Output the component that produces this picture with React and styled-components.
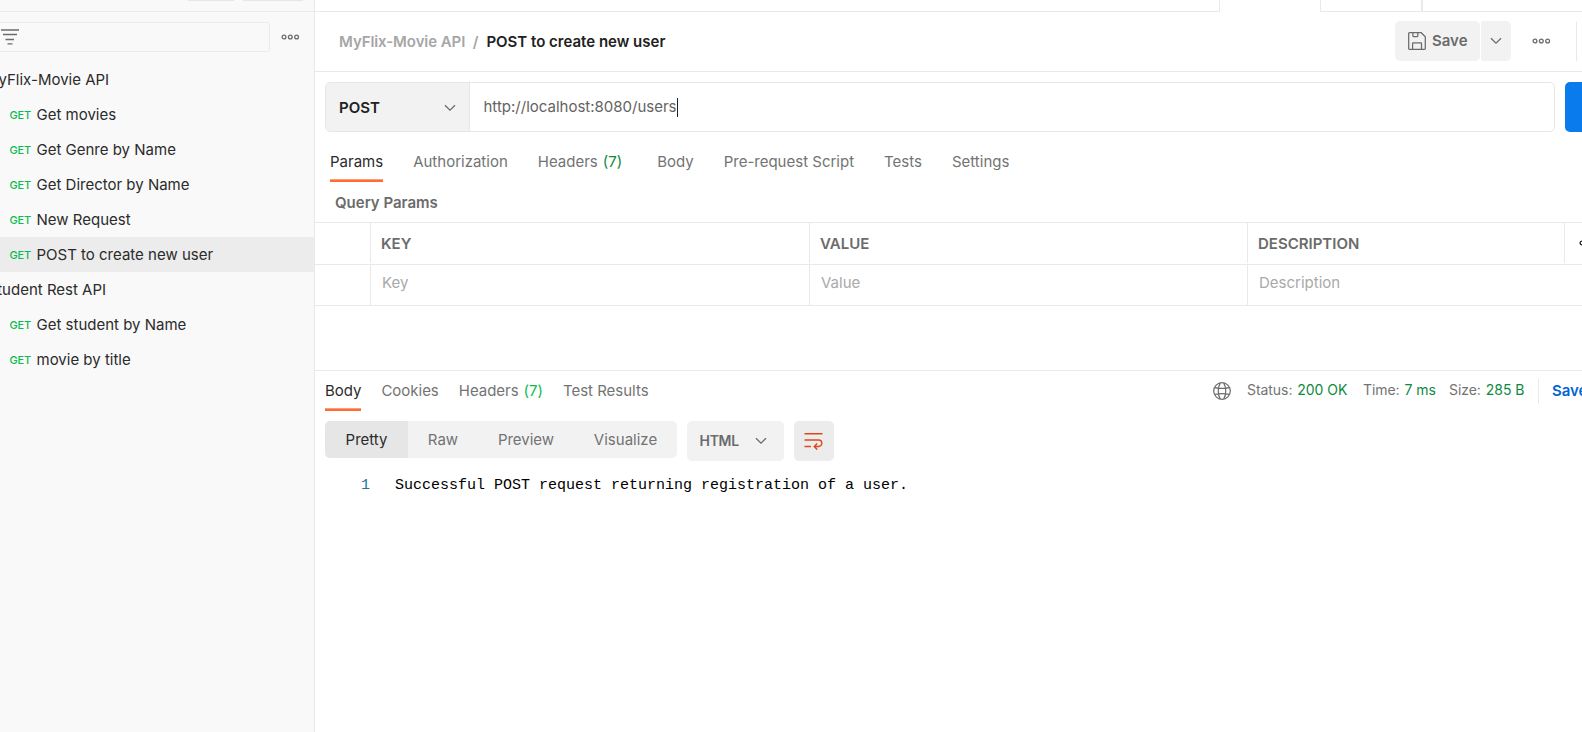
import React from "react";
import styled, { createGlobalStyle, css } from "styled-components";

const line = "#e9e9e9";

const Global = createGlobalStyle`
  * { box-sizing: border-box; }
  body { margin: 0; background: #fff; font-family: Inter, sans-serif; font-size: 15px; line-height: 20px; color: #212121; }
  svg { display: block; flex: none; }
`;

const Shell = styled.div`
  display: flex;
  width: 100%;
  height: 732px;
  overflow: hidden;
  white-space: nowrap;
`;

const Sidebar = styled.aside`
  flex: none;
  width: 315px;
  background: #f9f9f9;
  border-right: 1px solid ${line};
`;

const SidebarTop = styled.div`
  display: flex;
  justify-content: flex-end;
  gap: 9px;
  height: 12px;
  padding-right: 11px;
  border-bottom: 1px solid ${line};
`;

const TopButton = styled.div`
  width: ${(p) => p.$width}px;
  height: 1px;
  background: #e6e6e6;
`;

const FilterRow = styled.div`
  display: flex;
  align-items: center;
  height: 50px;
  padding-right: 14.5px;
  justify-content: space-between;
`;

const FilterBox = styled.div`
  display: flex;
  align-items: center;
  width: 270px;
  height: 30px;
  padding-left: 1px;
  border: 1px solid #ececec;
  border-left: 0;
  border-radius: 0 2px 2px 0;
`;

const Row = styled.div`
  display: flex;
  align-items: center;
  height: 35px;
  padding-left: 9.5px;
  color: #2b2b2b;
  background: ${(p) => (p.$active ? "#ececec" : "transparent")};
`;

const Verb = styled.span`
  width: 27px;
  font-size: 11px;
  font-weight: 500;
  letter-spacing: -0.2px;
  color: #0cbb52;
`;

const Collection = styled(Row)`
  padding-left: 0;
  overflow: hidden;
`;

const CollectionName = styled.span`
  margin-left: ${(p) => p.$shift}px;
`;

const Main = styled.main`
  flex: 1;
  min-width: 0;
  overflow: hidden;
`;

const FileTabs = styled.div`
  display: flex;
  height: 12px;
`;

const FileTab = styled.div`
  width: ${(p) => p.$width}px;
  flex: ${(p) => (p.$width ? "none" : 1)};
  border: 0 solid ${line};
  border-right-width: ${(p) => p.$right || 0}px;
  border-left-width: ${(p) => p.$left || 0}px;
  border-bottom-width: ${(p) => (p.$open ? 0 : 1)}px;
`;

const TitleBar = styled.div`
  display: flex;
  align-items: center;
  height: 60px;
  padding: 0 5px 1px 24px;
  border-bottom: 1px solid ${line};
`;

const Crumb = styled.span`
  padding-top: 2px;
  font-weight: 600;
  letter-spacing: ${(p) => p.$track || 0}px;
  color: ${(p) => (p.$current ? "#212121" : "#a6a6a6")};
  margin-right: ${(p) => p.$gap || 0}px;
`;

const Spacer = styled.div`
  flex: 1;
`;

const SaveGroup = styled.div`
  display: flex;
  gap: 1px;
  height: 40px;
  margin-right: 21px;
`;

const SaveButton = styled.div`
  display: flex;
  align-items: center;
  width: 85px;
  gap: 6px;
  padding-left: 13px;
  border-radius: 5px;
  background: #f2f2f2;
  color: #6b6b6b;
  font-weight: 600;
`;

const SaveMore = styled.div`
  display: flex;
  align-items: center;
  justify-content: center;
  width: 30px;
  border-radius: 2px 5px 5px 2px;
  background: #f2f2f2;
`;

const Divider = styled.div`
  width: 1px;
  height: ${(p) => p.$height}px;
  background: ${line};
  margin-left: ${(p) => p.$left}px;
`;

const UrlRow = styled.div`
  display: flex;
  gap: 10px;
  height: 60px;
  padding: 10px 0 0 10px;
`;

const UrlBox = styled.div`
  display: flex;
  flex: 1;
  height: 50px;
  border: 1px solid #e6e6e6;
  border-radius: 5px;
  overflow: hidden;
`;

const Method = styled.div`
  display: flex;
  align-items: center;
  justify-content: space-between;
  width: 144px;
  padding: 1px 13px 0 13px;
  background: #f2f2f2;
  border-right: 1px solid #e6e6e6;
  font-weight: 600;
`;

const Url = styled.div`
  display: flex;
  align-items: center;
  padding-left: 13.5px;
  color: #636363;
`;

const Caret = styled.span`
  width: 1px;
  height: 19px;
  background: #212121;
`;

const SendButton = styled.div`
  width: 17px;
  height: 50px;
  border-radius: 5px 0 0 5px;
  background: #097bed;
`;

const Tabs = styled.div`
  display: flex;
`;

const RequestTabs = styled(Tabs)`
  height: 50px;
  padding: 20px 0 0 15px;
  gap: 30px;
`;

const Tab = styled.div`
  position: relative;
  height: 30px;
  color: ${(p) => (p.$active ? "#2b2b2b" : "#737373")};
  margin-right: ${(p) => p.$extra || 0}px;
  ${(p) =>
    p.$active &&
    css`
      &::after {
        content: "";
        position: absolute;
        left: 0;
        right: 0;
        bottom: 0;
        height: 3px;
        background: linear-gradient(#ff9b76 1px, #ff6c37 1px);
      }
    `}
`;

const Count = styled.span`
  color: ${(p) => (p.$bright ? "#0cbb52" : "#0e8a3e")};
  margin-left: 5px;
`;

const SectionTitle = styled.div`
  height: 40px;
  padding: 11px 0 0 20px;
  font-weight: 600;
  color: #6b6b6b;
`;

const Table = styled.div`
  border-top: 1px solid ${line};
  margin-bottom: 64px;
`;

const TableRow = styled.div`
  display: grid;
  grid-template-columns: 55px 439px 438px ${(p) => (p.$head ? "317px 1fr" : "1fr")};
  height: ${(p) => (p.$head ? 42 : 41)}px;
  padding-bottom: ${(p) => (p.$head ? 1 : 0)}px;
  border-bottom: 1px solid ${line};
`;

const Cell = styled.div`
  display: flex;
  align-items: center;
  border-left: ${(p) => (p.$first ? 0 : 1)}px solid ${line};
  overflow: hidden;
  padding-left: 11px;
  padding-bottom: 4px;
  color: #a9a9a9;
`;

const HeadCell = styled(Cell)`
  padding-left: 10px;
  padding-bottom: 0;
  padding-top: 1px;
  font-weight: 600;
  color: #6b6b6b;
`;

const MoreCell = styled(HeadCell)`
  padding-left: 14px;
  padding-top: 0;
`;

const ResponseBar = styled.div`
  display: flex;
  height: 41px;
  border-top: 1px solid ${line};
  padding-left: 10px;
`;

const ResponseTabs = styled(Tabs)`
  padding-top: 10px;
  gap: 20px;
  flex: 1;
`;

const ResponseTab = styled(Tab)`
  letter-spacing: -0.02px;
`;

const Stats = styled.div`
  display: flex;
  align-items: center;
  height: 40px;
  font-size: 14px;
  letter-spacing: -0.06px;
  color: #737373;
`;

const Stat = styled.span`
  display: flex;
  gap: 5px;
  width: ${(p) => p.$width}px;
  margin-top: -2px;
`;

const Good = styled.span`
  color: #0e8a3e;
`;

const Globe = styled.span`
  margin-right: 16px;
`;

const SaveLink = styled.span`
  width: 30px;
  overflow: hidden;
  margin-left: 13px;
  font-size: 15px;
  font-weight: 600;
  color: #0265d2;
`;

const ViewBar = styled.div`
  display: flex;
  gap: 10px;
  height: 50px;
  padding: 10px 0 0 10px;
`;

const Segments = styled.div`
  display: flex;
  width: 352px;
  height: 37px;
  border-radius: 5px;
  overflow: hidden;
  background: #f2f2f2;
`;

const Segment = styled.div`
  display: flex;
  align-items: center;
  justify-content: center;
  width: ${(p) => p.$width}px;
  color: ${(p) => (p.$active ? "#2b2b2b" : "#737373")};
  background: ${(p) => (p.$active ? "#e6e6e6" : "transparent")};
`;

const Format = styled.div`
  display: flex;
  align-items: center;
  justify-content: space-between;
  width: 97px;
  height: 40px;
  padding: 0 17px 0 12.5px;
  border-radius: 5px;
  background: #f2f2f2;
  color: #6b6b6b;
  font-size: 14px;
  font-weight: 600;
  letter-spacing: -0.3px;
`;

const WrapButton = styled.div`
  display: flex;
  align-items: center;
  justify-content: center;
  width: 40px;
  height: 40px;
  padding-right: 1px;
  border-radius: 5px;
  background: #ececec;
`;

const Code = styled.div`
  display: flex;
  padding-top: 15px;
  font-family: "Liberation Mono", monospace;
  font-size: 15px;
  line-height: 20px;
  color: #000;
`;

const LineNumber = styled.span`
  width: 80px;
  padding-left: 46px;
  color: #237893;
`;

const Dots = ({ color = "#6b6b6b" }) => (
  <svg width="19" height="6" viewBox="0 0 19 6" fill="none" stroke={color} strokeWidth="1.3">
    <circle cx="3" cy="3" r="1.9" />
    <circle cx="9.3" cy="3" r="1.9" />
    <circle cx="15.6" cy="3" r="1.9" />
  </svg>
);

const Chevron = () => (
  <svg width="12" height="8" viewBox="0 0 12 8" fill="none" stroke="#6b6b6b" strokeWidth="1.3">
    <path d="M1 1.2 6 6.2 11 1.2" />
  </svg>
);

const FilterIcon = () => (
  <svg width="18" height="16" viewBox="0 0 18 16" stroke="#6b6b6b" strokeWidth="1.3">
    <path d="M0 1H18M2 5.5H16M4.5 10.5H13M6.5 14.8H11.5" />
  </svg>
);

const SaveIcon = () => (
  <svg width="18" height="18" viewBox="0 0 18 18" fill="none" stroke="#6b6b6b" strokeWidth="1.25">
    <path d="M1.4.7H13.2L17.3 4.8V16.6a.7.7 0 0 1-.7.7H1.4a.7.7 0 0 1-.7-.7V1.4a.7.7 0 0 1 .7-.7Z" />
    <path d="M4.9.7V4.1a.5.5 0 0 0 .5.5H9.3a.5.5 0 0 0 .5-.5V.7M4.6 17.3V11.3a.5.5 0 0 1 .5-.5H13a.5.5 0 0 1 .5.5V17.3" />
  </svg>
);

const GlobeIcon = () => (
  <svg width="18" height="18" viewBox="0 0 18 18" fill="none" stroke="#6b6b6b" strokeWidth="1.2">
    <circle cx="9" cy="9" r="8.3" />
    <path d="M7.3.9C4.6 5.5 4.6 12.5 7.3 17.1M10.7.9C13.4 5.5 13.4 12.5 10.7 17.1M1.6 5.6C6 6.6 12 6.6 16.4 5.6M1.6 12.4C6 11.4 12 11.4 16.4 12.4" />
  </svg>
);

const WrapIcon = () => (
  <svg width="19" height="18" viewBox="0 0 19 18" fill="none" stroke="#e0481a" strokeWidth="1.4">
    <path d="M.5 1.7H18.5M.5 8H14.6a3.2 3.2 0 0 1 0 6.5H10.3M.5 14.5H7M13.2 11.4 10.2 14.5 13.2 17.6" />
  </svg>
);

const movieRequests = ["Get movies", "Get Genre by Name", "Get Director by Name", "New Request", "POST to create new user"];
const studentRequests = ["Get student by Name", "movie by title"];

const Request = ({ name, active }) => (
  <Row $active={active}>
    <Verb>GET</Verb>
    <span>{name}</span>
  </Row>
);

export default function App() {
  return (
    <Shell>
      <Global />
      <Sidebar>
        <SidebarTop>
          <TopButton $width={46} />
          <TopButton $width={60} />
        </SidebarTop>
        <FilterRow>
          <FilterBox>
            <FilterIcon />
          </FilterBox>
          <Dots />
        </FilterRow>
        <Collection>
          <CollectionName $shift={-1.5}>yFlix-Movie API</CollectionName>
        </Collection>
        {movieRequests.map((name) => (
          <Request key={name} name={name} active={name.startsWith("POST")} />
        ))}
        <Collection>
          <CollectionName $shift={-2.8}>tudent Rest API</CollectionName>
        </Collection>
        {studentRequests.map((name) => (
          <Request key={name} name={name} />
        ))}
      </Sidebar>
      <Main>
        <FileTabs>
          <FileTab $width={905} $right={1} />
          <FileTab $width={100} $open />
          <FileTab $width={103} $left={1} $right={2} />
          <FileTab />
        </FileTabs>
        <TitleBar>
          <Crumb $gap={7.5} $track={-0.08}>MyFlix-Movie API</Crumb>
          <Crumb $gap={8}>/</Crumb>
          <Crumb $current>POST to create new user</Crumb>
          <Spacer />
          <SaveGroup>
            <SaveButton>
              <SaveIcon />
              Save
            </SaveButton>
            <SaveMore>
              <Chevron />
            </SaveMore>
          </SaveGroup>
          <Dots />
          <Divider $height={39} $left={25} />
        </TitleBar>
        <UrlRow>
          <UrlBox>
            <Method>
              POST
              <Chevron />
            </Method>
            <Url>
              http://localhost:8080/users
              <Caret />
            </Url>
          </UrlBox>
          <SendButton />
        </UrlRow>
        <RequestTabs>
          <Tab $active>Params</Tab>
          <Tab>Authorization</Tab>
          <Tab $extra={5}>
            Headers<Count>(7)</Count>
          </Tab>
          <Tab>Body</Tab>
          <Tab>Pre-request Script</Tab>
          <Tab>Tests</Tab>
          <Tab>Settings</Tab>
        </RequestTabs>
        <SectionTitle>Query Params</SectionTitle>
        <Table>
          <TableRow $head>
            <HeadCell $first />
            <HeadCell>KEY</HeadCell>
            <HeadCell>VALUE</HeadCell>
            <HeadCell>DESCRIPTION</HeadCell>
            <MoreCell>
              <Dots color="#212121" />
            </MoreCell>
          </TableRow>
          <TableRow>
            <Cell $first />
            <Cell>Key</Cell>
            <Cell>Value</Cell>
            <Cell>Description</Cell>
          </TableRow>
        </Table>
        <ResponseBar>
          <ResponseTabs>
            <ResponseTab $active>Body</ResponseTab>
            <ResponseTab>Cookies</ResponseTab>
            <ResponseTab>
              Headers<Count $bright>(7)</Count>
            </ResponseTab>
            <ResponseTab>Test Results</ResponseTab>
          </ResponseTabs>
          <Stats>
            <Globe>
              <GlobeIcon />
            </Globe>
            <Stat $width={116}>
              Status: <Good>200 OK</Good>
            </Stat>
            <Stat $width={86}>
              Time: <Good>7 ms</Good>
            </Stat>
            <Stat $width={89}>
              Size: <Good>285 B</Good>
            </Stat>
            <Divider $height={25} $left={0} />
            <SaveLink>Save</SaveLink>
          </Stats>
        </ResponseBar>
        <ViewBar>
          <Segments>
            <Segment $active $width={83}>Pretty</Segment>
            <Segment $width={70}>Raw</Segment>
            <Segment $width={96}>Preview</Segment>
            <Segment $width={103}>Visualize</Segment>
          </Segments>
          <Format>
            HTML
            <Chevron />
          </Format>
          <WrapButton>
            <WrapIcon />
          </WrapButton>
        </ViewBar>
        <Code>
          <LineNumber>1</LineNumber>
          <span>Successful POST request returning registration of a user.</span>
        </Code>
      </Main>
    </Shell>
  );
}
